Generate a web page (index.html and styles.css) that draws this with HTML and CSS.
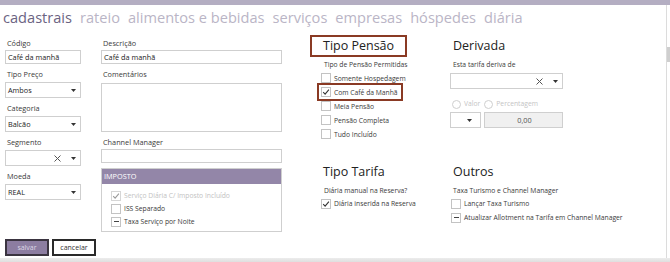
FILE: index.html
```html
<!DOCTYPE html>
<html lang="pt">
<head>
<meta charset="utf-8">
<link rel="stylesheet" href="styles.css">
</head>
<body>
<div class="topbar"></div>
<div class="frame">
  <div class="page">
    <nav class="tabs">
      <span class="tab active">cadastrais</span>
      <span class="tab">rateio</span>
      <span class="tab">alimentos e bebidas</span>
      <span class="tab">serviços</span>
      <span class="tab">empresas</span>
      <span class="tab">hóspedes</span>
      <span class="tab">diária</span>
    </nav>
    <div class="content">
      <div class="col col-a">
        <div class="field">
          <div class="label">Código</div>
          <div class="input">Café da manhã</div>
        </div>
        <div class="field">
          <div class="label">Tipo Preço</div>
          <div class="select"><span class="val">Ambos</span><svg class="caret" width="5" height="3" viewBox="0 0 5 3"><path d="M0 0h5L2.5 3z"/></svg></div>
        </div>
        <div class="field">
          <div class="label">Categoria</div>
          <div class="select"><span class="val">Balcão</span><svg class="caret" width="5" height="3" viewBox="0 0 5 3"><path d="M0 0h5L2.5 3z"/></svg></div>
        </div>
        <div class="field">
          <div class="label">Segmento</div>
          <div class="select"><span class="val"></span><svg class="clear" width="7" height="7" viewBox="0 0 7 7"><path d="M0.5 0.5l6 6M6.5 0.5l-6 6"/></svg><svg class="caret" width="5" height="3" viewBox="0 0 5 3"><path d="M0 0h5L2.5 3z"/></svg></div>
        </div>
        <div class="field">
          <div class="label">Moeda</div>
          <div class="select"><span class="val">REAL</span><svg class="caret" width="5" height="3" viewBox="0 0 5 3"><path d="M0 0h5L2.5 3z"/></svg></div>
        </div>
      </div>

      <div class="col col-b">
        <div class="field">
          <div class="label">Descrição</div>
          <div class="input">Café da manhã</div>
        </div>
        <div class="field">
          <div class="label">Comentários</div>
          <div class="textarea"></div>
        </div>
        <div class="field">
          <div class="label">Channel Manager</div>
          <div class="input"></div>
        </div>
        <div class="panel">
          <div class="panel-head">IMPOSTO</div>
          <div class="panel-body">
            <div class="check disabled"><span class="box"><svg width="8" height="8" viewBox="0 0 8 8"><path d="M1.2 4.2l1.9 1.9 3.8-4.4"/></svg></span>Serviço Diária C/ Imposto Incluído</div>
            <div class="check"><span class="box"></span>ISS Separado</div>
            <div class="check"><span class="box"><i class="dash"></i></span>Taxa Serviço por Noite</div>
          </div>
        </div>
      </div>

      <div class="right">
        <section class="sec">
          <h2 class="heading boxed">Tipo Pensão</h2>
          <div class="sub">Tipo de Pensão Permitidas</div>
          <div class="checks">
            <div class="check"><span class="box"></span>Somente Hospedagem</div>
            <div class="check marked"><span class="box"><svg width="8" height="8" viewBox="0 0 8 8"><path d="M1.2 4.2l1.9 1.9 3.8-4.4"/></svg></span>Com Café da Manhã</div>
            <div class="check"><span class="box"></span>Meia Pensão</div>
            <div class="check"><span class="box"></span>Pensão Completa</div>
            <div class="check"><span class="box"></span>Tudo Incluído</div>
          </div>
        </section>

        <section class="sec sec-d">
          <h2 class="heading">Derivada</h2>
          <div class="sub">Esta tarifa deriva de</div>
          <div class="select wide"><span class="val"></span><svg class="clear" width="7" height="7" viewBox="0 0 7 7"><path d="M0.5 0.5l6 6M6.5 0.5l-6 6"/></svg><svg class="caret" width="5" height="3" viewBox="0 0 5 3"><path d="M0 0h5L2.5 3z"/></svg></div>
          <div class="radios">
            <span class="radio"><span class="dot"></span>Valor</span>
            <span class="radio"><span class="dot"></span>Percentagem</span>
          </div>
          <div class="pair">
            <div class="select small"><span class="val"></span><svg class="caret" width="5" height="3" viewBox="0 0 5 3"><path d="M0 0h5L2.5 3z"/></svg></div>
            <div class="input num">0,00</div>
          </div>
        </section>

        <section class="sec low">
          <h2 class="heading">Tipo Tarifa</h2>
          <div class="sub">Diária manual na Reserva?</div>
          <div class="checks">
            <div class="check"><span class="box"><svg width="8" height="8" viewBox="0 0 8 8"><path d="M1.2 4.2l1.9 1.9 3.8-4.4"/></svg></span>Diária inserida na Reserva</div>
          </div>
        </section>

        <section class="sec sec-d low">
          <h2 class="heading">Outros</h2>
          <div class="sub">Taxa Turismo e Channel Manager</div>
          <div class="checks">
            <div class="check"><span class="box"></span>Lançar Taxa Turismo</div>
            <div class="check"><span class="box"><i class="dash"></i></span>Atualizar Allotment na Tarifa em Channel Manager</div>
          </div>
        </section>
      </div>
    </div>
    <div class="actions">
      <button class="btn primary">salvar</button>
      <button class="btn">cancelar</button>
    </div>
  </div>
  <div class="scroll"><div class="thumb"></div></div>
</div>
<div class="bottombar"></div>
</body>
</html>
```
FILE: styles.css
```css
* { box-sizing: border-box; }
html, body { margin: 0; padding: 0; }
body {
  width: 670px;
  height: 262px;
  overflow: hidden;
  background: #fff;
  font-family: "Open Sans", "Noto Sans", sans-serif;
  color: #333;
}
.topbar { height: 5px; background: #b4aec2; }
.frame { display: flex; height: 253px; }
.page { flex: 1; }
.scroll { width: 4px; border-left: 1px solid #dcdcdc; }
.thumb { margin-top: 42px; height: 15px; background: #cfcfcf; }
.bottombar { height: 4px; background: linear-gradient(#ececec, #dedede); }

.tabs {
  display: flex;
  gap: 8px;
  height: 23px;
  padding: 2px 0 0 3px;
  font-size: 14.6px;
  line-height: 20px;
  color: #bab5c6;
  white-space: nowrap;
}
.tab.active { color: #6b6382; }

.content { display: flex; }
.col { display: flex; flex-direction: column; padding-top: 10px; }
.col-a { width: 76px; margin-left: 5px; }
.col-b { width: 181px; margin-left: 20px; }
.field + .field { margin-top: 5px; }
.label { font-size: 7.3px; line-height: 11px; color: #3a3a3a; padding-left: 2px; }
.input, .select, .textarea {
  border: 1px solid #cfcfcf;
  background: #fff;
  font-size: 7.3px;
  color: #222;
}
.input { height: 14px; margin-top: 1px; line-height: 12px; padding-left: 2px; }
.select {
  height: 16px;
  margin-top: 2px;
  display: flex;
  align-items: center;
  padding: 0 4px 0 2px;
}
.select .val { flex: 1; }
.caret { fill: #333; }
.clear { stroke: #555; stroke-width: 1; margin-right: 10px; }
.textarea { height: 49px; margin-top: 3px; }

.panel { margin-top: 5px; border: 1px solid #cfcfcf; }
.panel-head {
  height: 15px;
  background: #9386a8;
  color: #fff;
  font-size: 7.3px;
  line-height: 15px;
  padding-left: 2px;
}
.panel-body { padding: 5px 0 3px 9px; }

.check {
  display: flex;
  align-items: center;
  height: 13px;
  font-size: 6.75px;
  color: #3a3a3a;
  white-space: nowrap;
}
.box {
  width: 10px;
  height: 10px;
  border: 1px solid #c3c3c3;
  background: #fff;
  margin-right: 3px;
  display: flex;
  align-items: center;
  justify-content: center;
  flex: none;
}
.box svg { fill: none; stroke: #333; stroke-width: 1.1; }
.dash { display: block; width: 5px; height: 1px; background: #444; }
.check.disabled { color: #c2c2c2; }
.check.disabled .box { border-color: #d6d6d6; }
.check.disabled .box svg { stroke: #9a9a9a; }

.right {
  display: grid;
  grid-template-columns: 140px 140px;
  padding-top: 7px;
  margin-left: 28px;
}
.sec { display: flex; flex-direction: column; align-items: flex-start; }
.sec.low { margin-top: 12px; }
.heading {
  margin: 0;
  font-size: 12.5px;
  font-weight: 400;
  line-height: 18px;
  color: #222;
  border: 2px solid transparent;
  padding-left: 11px;
}
.sec-d .heading { padding-left: 1px; }
.heading.boxed { border-color: #8a3a24; width: 97px; }
.sub { font-size: 6.75px; line-height: 10px; margin-top: 3px; padding-left: 3px; color: #3a3a3a; }
.sec .sub { margin-left: 11px; }
.sec-d .sub { margin-left: 0; }
.sec .checks { margin-top: 1px; margin-left: 11px; }
.sec-d .checks { margin-left: 1px; }
.sec .check { height: 14px; }
.check.marked {
  width: fit-content;
  outline: 2px solid #8a3a24;
  outline-offset: 2px;
  height: 10px;
  margin: 2px 0;
  padding-right: 1px;
}

.select.wide { width: 113px; margin-top: 3px; }
.radios { display: flex; gap: 4px; margin-top: 10px; margin-left: 2px; font-size: 6.75px; line-height: 10px; color: #c4c4c4; }
.radio { display: flex; align-items: center; }
.dot { width: 9px; height: 9px; border: 1px solid #cfcfcf; border-radius: 50%; margin-right: 3px; }
.pair { display: flex; gap: 3px; margin-top: 3px; }
.select.small { width: 31px; margin-top: 0; padding-right: 8px; }
.select.small .val { flex: 1; }
.input.num {
  width: 79px; height: 16px; margin-top: 0;
  background: #f0f0f0; text-align: center; line-height: 14px; color: #555;
}

.actions { display: flex; gap: 3px; margin: 7px 0 0 5px; }
.btn {
  width: 44px;
  height: 17px;
  border: 2px solid #2a2a2a;
  background: #fff;
  font-family: inherit;
  font-size: 7px;
  color: #333;
  padding: 0;
}
.btn.primary { background: #8c7da1; color: #ddd6e6; border-color: #3a3440; }
```
